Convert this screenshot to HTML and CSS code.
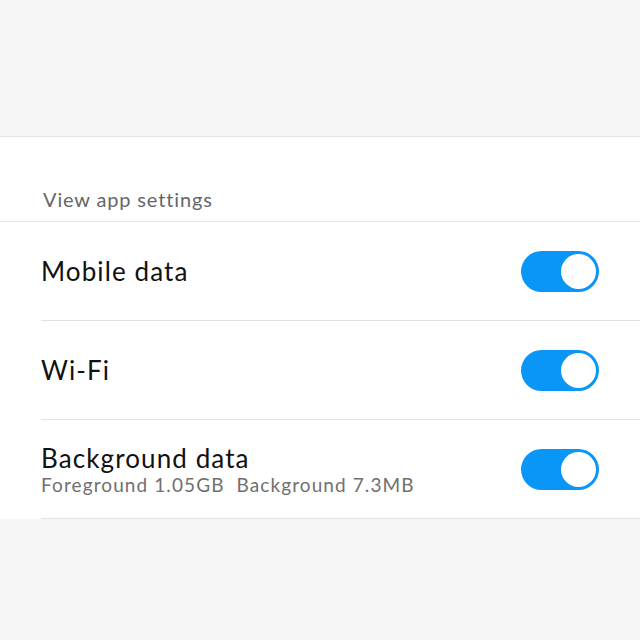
FILE: index.html
```html
<!DOCTYPE html>
<html>
<head>
<meta charset="utf-8">
<link rel="stylesheet" href="styles.css">
</head>
<body>
<div class="page">
  <div class="top"></div>
  <div class="panel">
    <div class="header">View app settings</div>
    <div class="row">
      <div class="texts"><div class="title">Mobile data</div></div>
      <div class="toggle on"><span class="knob"></span></div>
    </div>
    <div class="row">
      <div class="texts"><div class="title">Wi-Fi</div></div>
      <div class="toggle on"><span class="knob"></span></div>
    </div>
    <div class="row">
      <div class="texts">
        <div class="title">Background data</div>
        <div class="sub">Foreground 1.05GB&nbsp; Background 7.3MB</div>
      </div>
      <div class="toggle on"><span class="knob"></span></div>
    </div>
  </div>
  <div class="bottom"></div>
</div>
</body>
</html>
```
FILE: styles.css
```css
html, body {
  margin: 0;
  padding: 0;
  background: #f6f6f6;
}
.page {
  width: 640px;
  height: 640px;
  display: flex;
  flex-direction: column;
  font-family: "Lato", "Open Sans", sans-serif;
}
.top {
  height: 136px;
  background: #f5f5f5;
  border-bottom: 1px solid #e4e4e4;
  flex: none;
}
.panel {
  background: #fff;
  flex: none;
}
.header {
  height: 85px;
  box-sizing: border-box;
  padding: 50px 0 0 43px;
  font-size: 20px;
  letter-spacing: 0.85px;
  color: #666;
  border-bottom: 1px solid #e6e6e6;
}
.row {
  margin-left: 41px;
  height: 98px;
  border-bottom: 1px solid #e2e2e2;
  display: flex;
  align-items: center;
  justify-content: space-between;
  padding-right: 41px;
}
.title {
  font-size: 26px;
  letter-spacing: 1.1px;
  color: #111;
  line-height: 30px;
}
.sub {
  font-size: 19px;
  letter-spacing: 1.1px;
  color: #707070;
  margin-top: 0;
}
.toggle {
  width: 78px;
  height: 41px;
  border-radius: 21px;
  background: #0a96f6;
  display: flex;
  align-items: center;
  justify-content: flex-end;
  padding: 0 3px;
  box-sizing: border-box;
}
.knob {
  width: 35px;
  height: 35px;
  border-radius: 50%;
  background: #fff;
}
.bottom {
  flex: 1;
  background: #f6f6f6;
}
```
